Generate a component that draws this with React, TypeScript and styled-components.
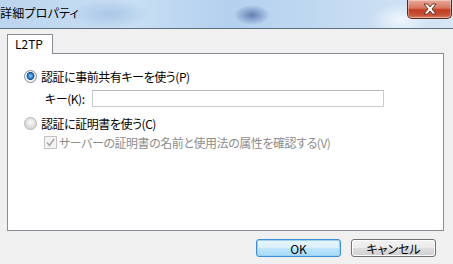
import React from "react";
import styled, { createGlobalStyle } from "styled-components";

const Global = createGlobalStyle`
  html, body { margin: 0; padding: 0; background: #f0f0f0; }
  body { font-family: "Noto Sans CJK JP", "Noto Sans", sans-serif; font-size: 12px; color: #000; }
  * { box-sizing: border-box; }
`;

const Window = styled.div`
  width: 453px;
  height: 264px;
  display: flex;
  flex-direction: column;
  background: #f0f0f0;
  overflow: hidden;
`;

const TitleBar = styled.div`
  height: 29px;
  flex: none;
  display: flex;
  align-items: flex-start;
  border-bottom: 1px solid #5e6f80;
  background:
    radial-gradient(ellipse 18px 10px at 252px 15px, rgba(70,100,160,0.75), rgba(70,100,160,0) 100%),
    radial-gradient(ellipse 40px 14px at 110px 14px, rgba(150,185,225,0.6), rgba(150,185,225,0) 100%),
    radial-gradient(ellipse 30px 16px at 400px 20px, rgba(255,255,255,0.7), rgba(255,255,255,0) 100%),
    linear-gradient(90deg, #bcd5ee 0%, #c8def3 30%, #b3d0ee 50%, #c4dbf2 75%, #d6e6f5 100%);
`;

const Title = styled.span`
  font-size: 12px;
  line-height: 14px;
  margin-top: 6px;
  color: #000;
  font-feature-settings: "palt";
  letter-spacing: 0.2px;
`;

const CloseButton = styled.div`
  margin-left: auto;
  margin-right: 1px;
  width: 45px;
  height: 19px;
  border: 1px solid #5a2a22;
  border-top: none;
  border-radius: 0 0 5px 5px;
  background: linear-gradient(180deg, #e9a99b 0%, #d8755f 45%, #c43c22 55%, #c8553a 85%, #dc8a6a 100%);
  display: flex;
  align-items: center;
  justify-content: center;
  box-shadow: inset 0 0 0 1px rgba(255,255,255,0.35);
`;

const Body = styled.div`
  flex: 1;
  display: flex;
  flex-direction: column;
  padding: 5px 9px 0 7px;
`;

const TabStrip = styled.div`
  display: flex;
  height: 19px;
  position: relative;
  z-index: 1;
`;

const Tab = styled.div`
  width: 46px;
  height: 20px;
  background: #fff;
  border: 1px solid #898c95;
  border-bottom: none;
  padding-left: 7px;
  line-height: 18px;
  font-size: 12px;
`;

const Panel = styled.div`
  height: 178px;
  background: #fff;
  border: 1px solid #898c95;
  padding: 14px 0 0 16px;
  display: flex;
  flex-direction: column;
  letter-spacing: -0.45px;
`;

const OptionRow = styled.label<{ $top?: number }>`
  display: flex;
  align-items: center;
  gap: 4px;
  height: 16px;
  margin-top: ${(p) => p.$top ?? 0}px;
  font-feature-settings: "palt";
`;

const Radio = styled.span<{ $checked?: boolean }>`
  width: 13px;
  height: 13px;
  border-radius: 50%;
  border: 1px solid ${(p) => (p.$checked ? "#8a8e96" : "#b4b4b4")};
  background: ${(p) =>
    p.$checked
      ? "radial-gradient(circle at 50% 45%, #8fd0ff 0%, #2a7fd0 30%, #134e94 45%, #f4f4f4 52%, #e0e0e0 100%)"
      : "radial-gradient(circle at 50% 40%, #fafafa 0%, #dcdcdc 60%, #cfcfcf 100%)"};
  flex: none;
`;

const KeyRow = styled.div`
  display: flex;
  align-items: center;
  margin-top: 6px;
  padding-left: 21px;
  height: 17px;
  font-feature-settings: "palt";
`;

const KeyLabel = styled.span`
  width: 47px;
`;

const KeyInput = styled.div`
  width: 292px;
  height: 17px;
  border: 1px solid #c9cbd0;
  border-top-color: #b5b8be;
  background: #fff;
`;

const CheckRow = styled.div`
  display: flex;
  align-items: center;
  gap: 2px;
  margin-top: 4px;
  padding-left: 20px;
  height: 15px;
  color: #8d8d8d;
  font-feature-settings: "palt";
`;

const CheckBox = styled.span`
  width: 13px;
  height: 13px;
  border: 1px solid #c4c4c4;
  background: #f4f4f4;
  display: flex;
  align-items: center;
  justify-content: center;
  flex: none;
`;

const Footer = styled.div`
  display: flex;
  justify-content: flex-end;
  gap: 10px;
  padding: 8px 8px 0 0;
`;

const Button = styled.div<{ $default?: boolean }>`
  width: 85px;
  height: 18px;
  border-radius: 3px;
  border: 1px solid ${(p) => (p.$default ? "#3c8ddc" : "#707070")};
  background: ${(p) =>
    p.$default
      ? "linear-gradient(180deg, #eaf6fd 0%, #d9f0fc 48%, #bee6fd 52%, #a7d9f5 100%)"
      : "linear-gradient(180deg, #f2f2f2 0%, #ebebeb 48%, #dddddd 52%, #cfcfcf 100%)"};
  box-shadow: inset 0 0 0 1px ${(p) => (p.$default ? "#9ed2f3" : "#fcfcfc")};
  display: flex;
  align-items: center;
  justify-content: center;
  font-size: 12px;
  font-feature-settings: "palt";
`;

export default function App() {
  return (
    <>
      <Global />
      <Window>
        <TitleBar>
          <Title>詳細プロパティ</Title>
          <CloseButton>
            <svg width="16" height="12" viewBox="0 0 16 12">
              <path
                d="M2 1 L5.5 1 L8 4 L10.5 1 L14 1 L10 6 L14 11 L10.5 11 L8 8 L5.5 11 L2 11 L6 6 Z"
                fill="#fff"
                stroke="#5b2b23"
                strokeWidth="0.9"
                strokeLinejoin="round"
              />
            </svg>
          </CloseButton>
        </TitleBar>
        <Body>
          <TabStrip>
            <Tab>L2TP</Tab>
          </TabStrip>
          <Panel>
            <OptionRow>
              <Radio $checked />
              認証に事前共有キーを使う(P)
            </OptionRow>
            <KeyRow>
              <KeyLabel>キー(K):</KeyLabel>
              <KeyInput />
            </KeyRow>
            <OptionRow $top={8}>
              <Radio />
              認証に証明書を使う(C)
            </OptionRow>
            <CheckRow>
              <CheckBox>
                <svg width="9" height="9" viewBox="0 0 9 9">
                  <path d="M1 4.5 L3.5 7.5 L8 1" fill="none" stroke="#a8a8a8" strokeWidth="1.6" />
                </svg>
              </CheckBox>
              サーバーの証明書の名前と使用法の属性を確認する(V)
            </CheckRow>
          </Panel>
          <Footer>
            <Button $default>OK</Button>
            <Button>キャンセル</Button>
          </Footer>
        </Body>
      </Window>
    </>
  );
}
